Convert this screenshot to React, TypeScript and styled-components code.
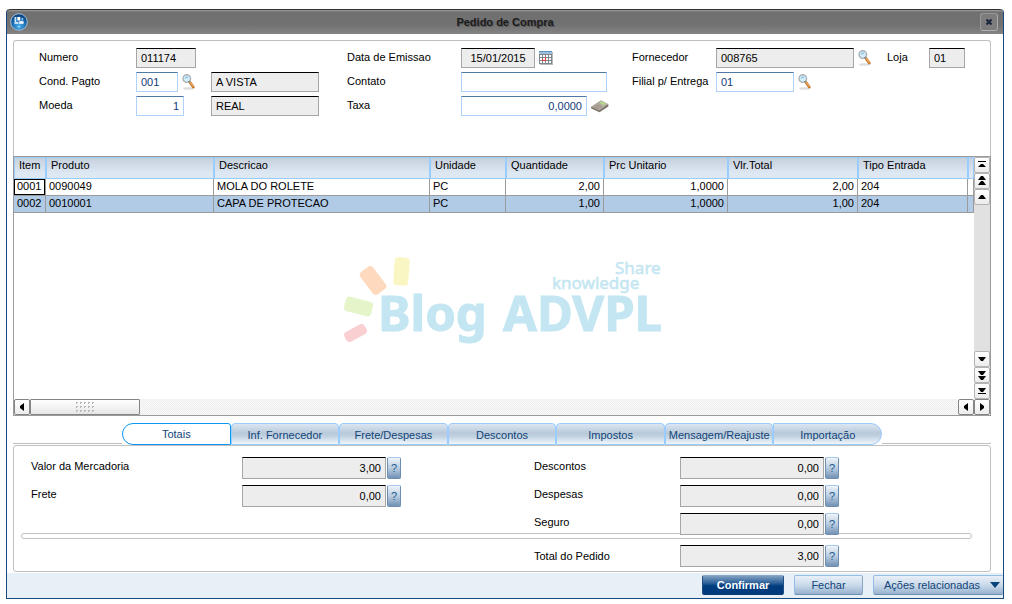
import React, { useState } from "react";
import styled, { createGlobalStyle, css } from "styled-components";

const Global = createGlobalStyle`
  * { box-sizing: border-box; }
  body { margin: 0; background: #fff; }
  body, button, input { font-family: "Liberation Sans", Arial, sans-serif; font-size: 11px; }
  button, input { margin: 0; }
`;

const Window = styled.main`
  display: flex;
  flex-direction: column;
  margin: 9px 8px 5px 6px;
  min-height: calc(100vh - 14px);
  border: solid #17497f;
  border-width: 0 1px 1px;
  border-radius: 4px 4px 1px 1px;
  overflow: hidden;
`;

const TitleBar = styled.header`
  display: grid;
  grid-template-columns: 20px 1fr 20px;
  align-items: center;
  height: 25px;
  margin: 0 -1px;
  padding: 0 4px 0 3px;
  border: 1px solid #333;
  border-width: 1px 0 0 1px;
  border-radius: 4px 4px 0 0;
  background: linear-gradient(#a0a0a0 0, #707070 2px, #717171 60%, #838383);
`;

const Title = styled.h1`
  margin: 0;
  text-align: center;
  font-size: 11px;
  line-height: 16px;
  font-weight: bold;
  color: #1c1c1c;
  text-shadow: 1px 1px 0 #555;
`;

const CloseButton = styled.button`
  display: grid;
  place-items: center;
  width: 18px;
  height: 18px;
  padding: 0;
  border: 1px solid #aaa;
  border-color: #979797 #a8a8a8 #b0b0b0 #979797;
  border-radius: 3px;
  background: #7d7d7d;
`;

const FormPanel = styled.section`
  display: grid;
  grid-template-columns: minmax(0, 308fr) minmax(0, 285fr) minmax(0, 358fr);
  margin: 6px 12px 0 6px;
  padding: 7px 0 40px 25px;
  border: solid #c0c0c0;
  border-width: 1px 1px 0;
  border-radius: 3px 3px 0 0;
`;

const FieldColumn = styled.div`
  display: flex;
  flex-direction: column;
  gap: 4px;
`;

const FieldRow = styled.div`
  display: flex;
  height: 20px;
`;

const Label = styled.label<{ $w: number }>`
  flex: none;
  width: ${(p) => p.$w}px;
  height: 15px;
  line-height: 18px;
  overflow: hidden;
  white-space: nowrap;
  color: #000;
`;

const TotalLabel = styled(Label)`
  height: 18px;
`;

const Slot = styled.div<{ $w?: number }>`
  display: flex;
  flex: none;
  align-items: center;
  gap: 4px;
  ${(p) => p.$w && css`width: ${p.$w}px;`}
`;

const TextBox = styled.input<{ $w: number; $align?: string; $tall?: boolean }>`
  flex: none;
  width: ${(p) => p.$w}px;
  height: ${(p) => (p.$tall ? 22 : 20)}px;
  padding: 0 4px 1px;
  border: 1px solid #aed2fb;
  border-top-color: #4f7aa6;
  border-radius: 0;
  outline: none;
  background: #fff;
  color: #123a78;
  text-align: ${(p) => p.$align ?? "left"};
  &:read-only {
    border-color: #000 #a6a6a6 #a6a6a6;
    background: #ededed;
    color: #000;
  }
`;

const IconButton = styled.button`
  display: flex;
  padding: 0;
  border: 0;
  background: none;
`;

const Browse = styled.section`
  flex: 1;
  display: grid;
  grid-template-columns: minmax(0, 1fr) 16px;
  grid-template-rows: minmax(226px, 1fr) 16px;
  margin: 0 12px 0 6px;
  border: 1px solid #9b9b9b;
`;

const Table = styled.table`
  width: 100%;
  table-layout: fixed;
  border-collapse: separate;
  border-spacing: 0;
`;

const HeadCell = styled.th`
  height: 22px;
  padding: 0 0 0 4px;
  border: 1px solid #99ccff;
  background: linear-gradient(#c5d0dd, #dee8f3 75%);
  line-height: 14px;
  vertical-align: top;
  text-align: left;
  font-weight: normal;
  white-space: nowrap;
`;

const Row = styled.tr<{ $selected?: boolean }>`
  background: ${(p) => (p.$selected ? "#b1cae6" : "#fff")};
`;

const Cell = styled.td<{ $right?: boolean; $focus?: boolean }>`
  height: 17px;
  padding: 0 3px;
  border: solid #9b9b9b;
  border-width: 0 1px 1px 0;
  line-height: 14px;
  vertical-align: top;
  white-space: nowrap;
  text-align: ${(p) => (p.$right ? "right" : "left")};
  ${(p) => p.$focus && css`box-shadow: inset 0 0 0 1px #000;`}
`;

const Watermark = styled.div`
  display: flex;
  justify-content: center;
  padding: 44px 0 0 19px;
`;

const VScroll = styled.div`
  display: flex;
  flex-direction: column;
  justify-content: space-between;
  background: #e1e1e1;
`;

const HScroll = styled.div`
  grid-column: 1 / 3;
  display: flex;
  background: repeating-conic-gradient(#ececec 0 25%, #fbfbfb 0 50%) 0 0 / 2px 2px;
`;

const ScrollButton = styled.button<{ $dark?: boolean }>`
  display: grid;
  place-items: center;
  width: 16px;
  height: 16px;
  padding: 0;
  border: 1px solid ${(p) => (p.$dark ? "#858585" : "#b4b4b4")};
  border-radius: 2px;
  background: linear-gradient(#fff, #ececec);
`;

const Thumb = styled.div`
  display: grid;
  place-items: center;
  width: 110px;
  border: 1px solid #858585;
  border-radius: 1px;
  background: linear-gradient(#fff, #e6e6e6);
`;

const Spacer = styled.div`
  flex: 1;
`;

const TabBar = styled.nav`
  display: grid;
  grid-template-columns: 109fr 760fr 109fr;
  margin: 7px 12px 0 6px;
`;

const TabRule = styled.div`
  height: 21px;
  border-bottom: 1px solid #c0c0c0;
`;

const TabList = styled.div`
  display: flex;
`;

const Tab = styled.button`
  flex: 1 1 0;
  min-width: 0;
  height: 22px;
  padding: 2px 0 0;
  border: 1px solid #99ccff;
  border-radius: 4px 4px 0 0;
  background: linear-gradient(#dbe6f2 0, #b9c9da 45%, #bfd0e0 60%, #f0f6fb 100%);
  color: #114478;
  line-height: 16px;
  white-space: nowrap;
  &:first-child { border-radius: 11px 3px 0 11px; }
  &:last-child { border-radius: 0 11px 11px 0; }
  &[aria-selected="true"] {
    border-color: #0e97f2;
    background: #fff;
    padding-top: 0;
  }
`;

const TotalsPanel = styled.section`
  display: flex;
  flex-direction: column;
  margin: 0 12px 0 6px;
  padding: 11px 0 4px;
  border: 1px solid #c0c0c0;
  border-radius: 3px;
`;

const TotalsGrid = styled.div`
  display: grid;
  grid-template-columns: minmax(0, 520fr) minmax(0, 456fr);
  position: relative;
  z-index: 1;
`;

const TotalsColumn = styled.div<{ $indent?: boolean }>`
  display: flex;
  flex-direction: column;
  gap: 6px;
  padding-left: ${(p) => (p.$indent ? 17 : 0)}px;
`;

const TotalRow = styled.div<{ $middle?: boolean }>`
  display: flex;
  align-items: ${(p) => (p.$middle ? "center" : "flex-start")};
  height: 22px;
`;

const HelpButton = styled.button`
  width: 14px;
  height: 22px;
  margin-left: 1px;
  padding: 0;
  border: 1px solid #6f8fb2;
  border-top-color: #a5c9ef;
  border-radius: 2px;
  background: linear-gradient(#eef4fa, #b9cde1 50%, #7392b5);
  color: #1d5a8f;
`;

const Divider = styled.div`
  height: 6px;
  margin: -2px 18px 6px 7px;
  border: 1px solid #c0c0c0;
  border-radius: 3px;
`;

const Footer = styled.footer`
  display: flex;
  justify-content: flex-end;
  gap: 10px;
  height: 25px;
  margin-top: 1px;
  padding-top: 2px;
  background: #e8f0f7;
`;

const ActionButton = styled.button<{ $w: number; $primary?: boolean; $menu?: boolean }>`
  display: flex;
  align-items: center;
  justify-content: ${(p) => (p.$menu ? "space-between" : "center")};
  width: ${(p) => p.$w}px;
  height: 20px;
  padding: ${(p) => (p.$menu ? "0 2px 0 10px" : "0")};
  border: 1px solid #94bce6;
  border-bottom-color: #6f8fb0;
  border-right-color: ${(p) => (p.$menu ? "transparent" : "#86a6c8")};
  border-radius: ${(p) => (p.$menu ? "2px 0 0 2px" : "2px")};
  background: linear-gradient(#e9f0f8, #c6d7e8 55%, #98b2ce);
  color: #114478;
  white-space: nowrap;
  ${(p) =>
    p.$primary &&
    css`
      border-color: #8aa6c4 #1d4f85 #0b3a70;
      background: linear-gradient(#7f9fc1, #2b5f98 40%, #003c7d 55%, #003c7d);
      color: #fff;
      font-weight: bold;
    `}
`;

const Magnifier = () => (
  <svg width="14" height="18" viewBox="0 0 14 18" aria-hidden="true">
    <ellipse cx="6.500" cy="15.500" rx="5.500" ry="1.200" fill="#dcdedf" />
    <path d="M8 9.500 L11.300 14" stroke="#c4752c" strokeWidth="2.800" strokeLinecap="round" />
    <path d="M8 9.200 L11 13.200" stroke="#f3a95a" strokeWidth="1.300" strokeLinecap="round" />
    <circle cx="4.800" cy="5.600" r="3.800" fill="#d4edf8" stroke="#a9b0b5" strokeWidth="1.400" />
    <path d="M2.600 5.800 A2.400 2.400 0 0 1 6.800 4.400 Z" fill="#86c5e3" />
    <path d="M6.400 8.800 L8.200 8.400" stroke="#7b848a" strokeWidth="1.500" />
  </svg>
);

const Calendar = () => (
  <svg width="14" height="14" viewBox="0 0 14 14" aria-hidden="true">
    <path d="M1 1H14V14H1Z" fill="#b9b9b9" />
    <path d="M0 0H13V13H0Z" fill="#7f878d" />
    <path d="M0 0H13V3H0Z" fill="#9dbedb" />
    <path d="M0 0H13V1H0Z" fill="#5f92c2" />
    {[4, 7, 10].map((y) =>
      [1, 4, 7, 10].map((x) => <rect key={`${x}-${y}`} x={x} y={y} width="2" height="2" fill="#fff" />)
    )}
    <path d="M6 6H7V9H6ZM4 9H7V10H4ZM3 8H4V10H3Z" fill="#ee3a3a" />
  </svg>
);

const Calculator = () => (
  <svg width="18" height="14" viewBox="0 0 18 14" aria-hidden="true">
    <path d="M0 8 L10 1.500 L17.500 5.500 L17.300 7.500 L8.500 13.300 L0.300 9.600Z" fill="#7b7268" />
    <path d="M0.300 7.800 L9.800 1.500 L17.200 5.300 L8.200 11.400Z" fill="#b3aaa0" />
    <path d="M8.300 3.800 L10.600 2.300 L15.200 4.700 L12.800 6.200Z" fill="#b4dc8a" />
    <path d="M3.200 7.700 L8 10 M4.800 6.700 L9.600 9 M6.400 5.700 L11.200 8" stroke="#8a7f74" strokeWidth="0.900" strokeDasharray="1.400 1" />
  </svg>
);

const AppLogo = () => (
  <svg width="18" height="18" viewBox="0 0 18 18" aria-hidden="true">
    <defs>
      <radialGradient id="orb" cx="50%" cy="75%" r="65%">
        <stop offset="0" stopColor="#4fb3ee" />
        <stop offset="0.6" stopColor="#1a6fb5" />
        <stop offset="1" stopColor="#0c4684" />
      </radialGradient>
    </defs>
    <circle cx="9" cy="9" r="8.300" fill="url(#orb)" stroke="#9fbdd6" strokeWidth="1" />
    <path d="M4.500 4H6.300V9H8.500V11H4.500Z" fill="#c6e0f4" />
    <path d="M7.300 4H10.300V7.500H7.300Z" fill="#fff" />
    <path d="M9.200 8.300H13.600V10.800H9.200Z" fill="#fff" />
    <path d="M11.600 5H13.200V7.500H11.600Z" fill="#8fc2e8" />
    <circle cx="9" cy="13.800" r="1" fill="#9ed4f5" />
  </svg>
);

const WatermarkArt = () => (
  <svg width="320" height="90" viewBox="0 0 320 90" role="img" aria-label="Blog ADVPL">
    <rect x="-7.500" y="-14" width="15" height="28" rx="4" fill="#faf6c4" transform="translate(57.500 14.500) rotate(4)" />
    <rect x="-8" y="-14" width="16" height="28" rx="4" fill="#fed9bd" transform="translate(29 23.500) rotate(-37)" />
    <rect x="-7.500" y="-14" width="15" height="28" rx="4" fill="#e6f5c9" transform="translate(14.500 49.500) rotate(-76)" />
    <rect x="-5.500" y="-11.500" width="11" height="23" rx="4" fill="#f9cfd2" transform="translate(11.500 76) rotate(62)" />
    <g fill="#c3e6f2" fontFamily="'Noto Sans', sans-serif">
      <text x="34" y="74" fontSize="49" fontWeight="700" stroke="#c3e6f2" strokeWidth="1">Blog</text>
      <text x="159" y="74" fontSize="49" fontWeight="700" stroke="#c3e6f2" strokeWidth="1">ADVPL</text>
      <text x="271" y="17" fontSize="17" stroke="#c3e6f2" strokeWidth="0.500">Share</text>
      <text x="208" y="32" fontSize="17" stroke="#c3e6f2" strokeWidth="0.500">knowledge</text>
    </g>
  </svg>
);

type ArrowKind = "top" | "pageUp" | "up" | "down" | "pageDown" | "bottom" | "left" | "right";

const arrowPaths: Record<ArrowKind, string> = {
  top: "M1 1H9V2H1ZM4 4H6L9 7H1Z",
  pageUp: "M4 0H6L9 4H1ZM4 5H6L9 9H1Z",
  up: "M4 3H6L9 7H1Z",
  down: "M1 3H9L6 7H4Z",
  pageDown: "M1 1H9L6 5H4ZM1 6H9L6 10H4Z",
  bottom: "M1 2H9L6 6H4ZM1 7H9V8H1Z",
  left: "M7 1V9L3 6V4Z",
  right: "M3 1V9L7 6V4Z",
};

const Arrow = ({ kind }: { kind: ArrowKind }) => (
  <svg width="10" height="10" viewBox="0 0 10 10" aria-hidden="true">
    <path d={arrowPaths[kind]} fill="#000" />
  </svg>
);

const Grip = () => (
  <svg width="18" height="10" viewBox="0 0 18 10" aria-hidden="true">
    {[0, 4, 8].map((y) =>
      [0, 4, 8, 12, 16].map((x) => (
        <path key={`${x}-${y}`} d={`M${x} ${y}h2v1h-1v1h-1z`} fill="#b5b5b5" />
      ))
    )}
  </svg>
);

const Lookup = ({ name }: { name: string }) => (
  <IconButton type="button" aria-label={`Pesquisar ${name}`}>
    <Magnifier />
  </IconButton>
);

const columns = [
  { title: "Item", width: 32 },
  { title: "Produto", width: 168 },
  { title: "Descricao", width: 216 },
  { title: "Unidade", width: 76 },
  { title: "Quantidade", width: 98, right: true },
  { title: "Prc Unitario", width: 124, right: true },
  { title: "Vlr.Total", width: 130, right: true },
  { title: "Tipo Entrada", width: 110 },
  { title: "", width: 6 },
];

const items = [
  ["0001", "0090049", "MOLA DO ROLETE", "PC", "2,00", "1,0000", "2,00", "204", ""],
  ["0002", "0010001", "CAPA DE PROTECAO", "PC", "1,00", "1,0000", "1,00", "204", ""],
];

const tabs = ["Totais", "Inf. Fornecedor", "Frete/Despesas", "Descontos", "Impostos", "Mensagem/Reajuste", "Importação"];

type TotalProps = { id: string; label: string; value: string; labelWidth: number; middle?: boolean };

const Total = ({ id, label, value, labelWidth, middle }: TotalProps) => (
  <TotalRow $middle={middle}>
    <TotalLabel htmlFor={id} $w={labelWidth}>{label}</TotalLabel>
    <TextBox id={id} $w={144} $align="right" $tall readOnly value={value} />
    <HelpButton type="button" aria-label={`Ajuda ${label}`}>?</HelpButton>
  </TotalRow>
);

export default function App() {
  const [tab, setTab] = useState(0);
  return (
    <>
      <Global />
      <Window>
        <TitleBar>
          <AppLogo />
          <Title>Pedido de Compra</Title>
          <CloseButton type="button" aria-label="Fechar janela">
            <svg width="8" height="8" viewBox="0 0 8 8" aria-hidden="true">
              <path d="M1.500 1.500L6.500 6.500M6.500 1.500L1.500 6.500" stroke="#1c2740" strokeWidth="2.200" />
            </svg>
          </CloseButton>
        </TitleBar>

        <FormPanel>
          <FieldColumn>
            <FieldRow>
              <Label htmlFor="numero" $w={97}>Numero</Label>
              <TextBox id="numero" $w={60} readOnly value="011174" />
            </FieldRow>
            <FieldRow>
              <Label htmlFor="cond" $w={97}>Cond. Pagto</Label>
              <Slot $w={75}>
                <TextBox id="cond" $w={42} defaultValue="001" />
                <Lookup name="condição" />
              </Slot>
              <TextBox aria-label="Descrição da condição" $w={108} readOnly value="A VISTA" />
            </FieldRow>
            <FieldRow>
              <Label htmlFor="moeda" $w={97}>Moeda</Label>
              <Slot $w={75}>
                <TextBox id="moeda" $w={48} $align="right" defaultValue="1" />
              </Slot>
              <TextBox aria-label="Nome da moeda" $w={108} readOnly value="REAL" />
            </FieldRow>
          </FieldColumn>

          <FieldColumn>
            <FieldRow>
              <Label htmlFor="emissao" $w={114}>Data de Emissao</Label>
              <Slot>
                <TextBox id="emissao" $w={74} $align="center" readOnly value="15/01/2015" />
                <IconButton type="button" aria-label="Calendário"><Calendar /></IconButton>
              </Slot>
            </FieldRow>
            <FieldRow>
              <Label htmlFor="contato" $w={114}>Contato</Label>
              <TextBox id="contato" $w={146} />
            </FieldRow>
            <FieldRow>
              <Label htmlFor="taxa" $w={114}>Taxa</Label>
              <Slot>
                <TextBox id="taxa" $w={126} $align="right" defaultValue="0,0000" />
                <IconButton type="button" aria-label="Calculadora"><Calculator /></IconButton>
              </Slot>
            </FieldRow>
          </FieldColumn>

          <FieldColumn>
            <FieldRow>
              <Label htmlFor="fornecedor" $w={84}>Fornecedor</Label>
              <Slot $w={171}>
                <TextBox id="fornecedor" $w={138} readOnly value="008765" />
                <Lookup name="fornecedor" />
              </Slot>
              <Label htmlFor="loja" $w={42}>Loja</Label>
              <TextBox id="loja" $w={36} readOnly value="01" />
            </FieldRow>
            <FieldRow>
              <Label htmlFor="filial" $w={84}>Filial p/ Entrega</Label>
              <Slot>
                <TextBox id="filial" $w={78} defaultValue="01" />
                <Lookup name="filial" />
              </Slot>
            </FieldRow>
          </FieldColumn>
        </FormPanel>

        <Browse>
          <div>
            <Table>
              <colgroup>
                {columns.map((c, i) => <col key={i} width={c.width} />)}
              </colgroup>
              <thead>
                <tr>{columns.map((c, i) => <HeadCell key={i}>{c.title}</HeadCell>)}</tr>
              </thead>
              <tbody>
                {items.map((item, r) => (
                  <Row key={item[0]} $selected={r === 1}>
                    {item.map((value, c) => (
                      <Cell key={c} $right={columns[c].right} $focus={r === 0 && c === 0}>{value}</Cell>
                    ))}
                  </Row>
                ))}
              </tbody>
            </Table>
            <Watermark><WatermarkArt /></Watermark>
          </div>
          <VScroll>
            <div>
              <ScrollButton type="button" aria-label="Primeira linha"><Arrow kind="top" /></ScrollButton>
              <ScrollButton type="button" aria-label="Página acima"><Arrow kind="pageUp" /></ScrollButton>
              <ScrollButton type="button" aria-label="Linha acima"><Arrow kind="up" /></ScrollButton>
            </div>
            <div>
              <ScrollButton type="button" aria-label="Linha abaixo"><Arrow kind="down" /></ScrollButton>
              <ScrollButton type="button" aria-label="Página abaixo"><Arrow kind="pageDown" /></ScrollButton>
              <ScrollButton type="button" aria-label="Última linha"><Arrow kind="bottom" /></ScrollButton>
            </div>
          </VScroll>
          <HScroll>
            <ScrollButton $dark type="button" aria-label="Rolar à esquerda"><Arrow kind="left" /></ScrollButton>
            <Thumb><Grip /></Thumb>
            <Spacer />
            <ScrollButton $dark type="button" aria-label="Coluna anterior"><Arrow kind="left" /></ScrollButton>
            <ScrollButton $dark type="button" aria-label="Próxima coluna"><Arrow kind="right" /></ScrollButton>
          </HScroll>
        </Browse>

        <TabBar>
          <TabRule />
          <TabList role="tablist">
            {tabs.map((name, i) => (
              <Tab key={name} type="button" role="tab" aria-selected={i === tab} onClick={() => setTab(i)}>
                {name}
              </Tab>
            ))}
          </TabList>
          <TabRule />
        </TabBar>

        <TotalsPanel>
          <TotalsGrid>
            <TotalsColumn $indent>
              <Total id="mercadoria" label="Valor da Mercadoria" value="3,00" labelWidth={211} />
              <Total id="frete" label="Frete" value="0,00" labelWidth={211} />
            </TotalsColumn>
            <TotalsColumn>
              <Total id="descontos" label="Descontos" value="0,00" labelWidth={146} />
              <Total id="despesas" label="Despesas" value="0,00" labelWidth={146} />
              <Total id="seguro" label="Seguro" value="0,00" labelWidth={146} />
            </TotalsColumn>
          </TotalsGrid>
          <Divider />
          <TotalsGrid>
            <div />
            <TotalsColumn>
              <Total id="total" label="Total do Pedido" value="3,00" labelWidth={146} middle />
            </TotalsColumn>
          </TotalsGrid>
        </TotalsPanel>

        <Footer>
          <ActionButton type="button" $w={82} $primary>Confirmar</ActionButton>
          <ActionButton type="button" $w={69}>Fechar</ActionButton>
          <ActionButton type="button" $w={130} $menu aria-haspopup="menu">
            Ações relacionadas
            <svg width="10" height="6" viewBox="0 0 10 6" aria-hidden="true">
              <path d="M0 0H10L5 6Z" fill="#0a4478" />
            </svg>
          </ActionButton>
        </Footer>
      </Window>
    </>
  );
}
